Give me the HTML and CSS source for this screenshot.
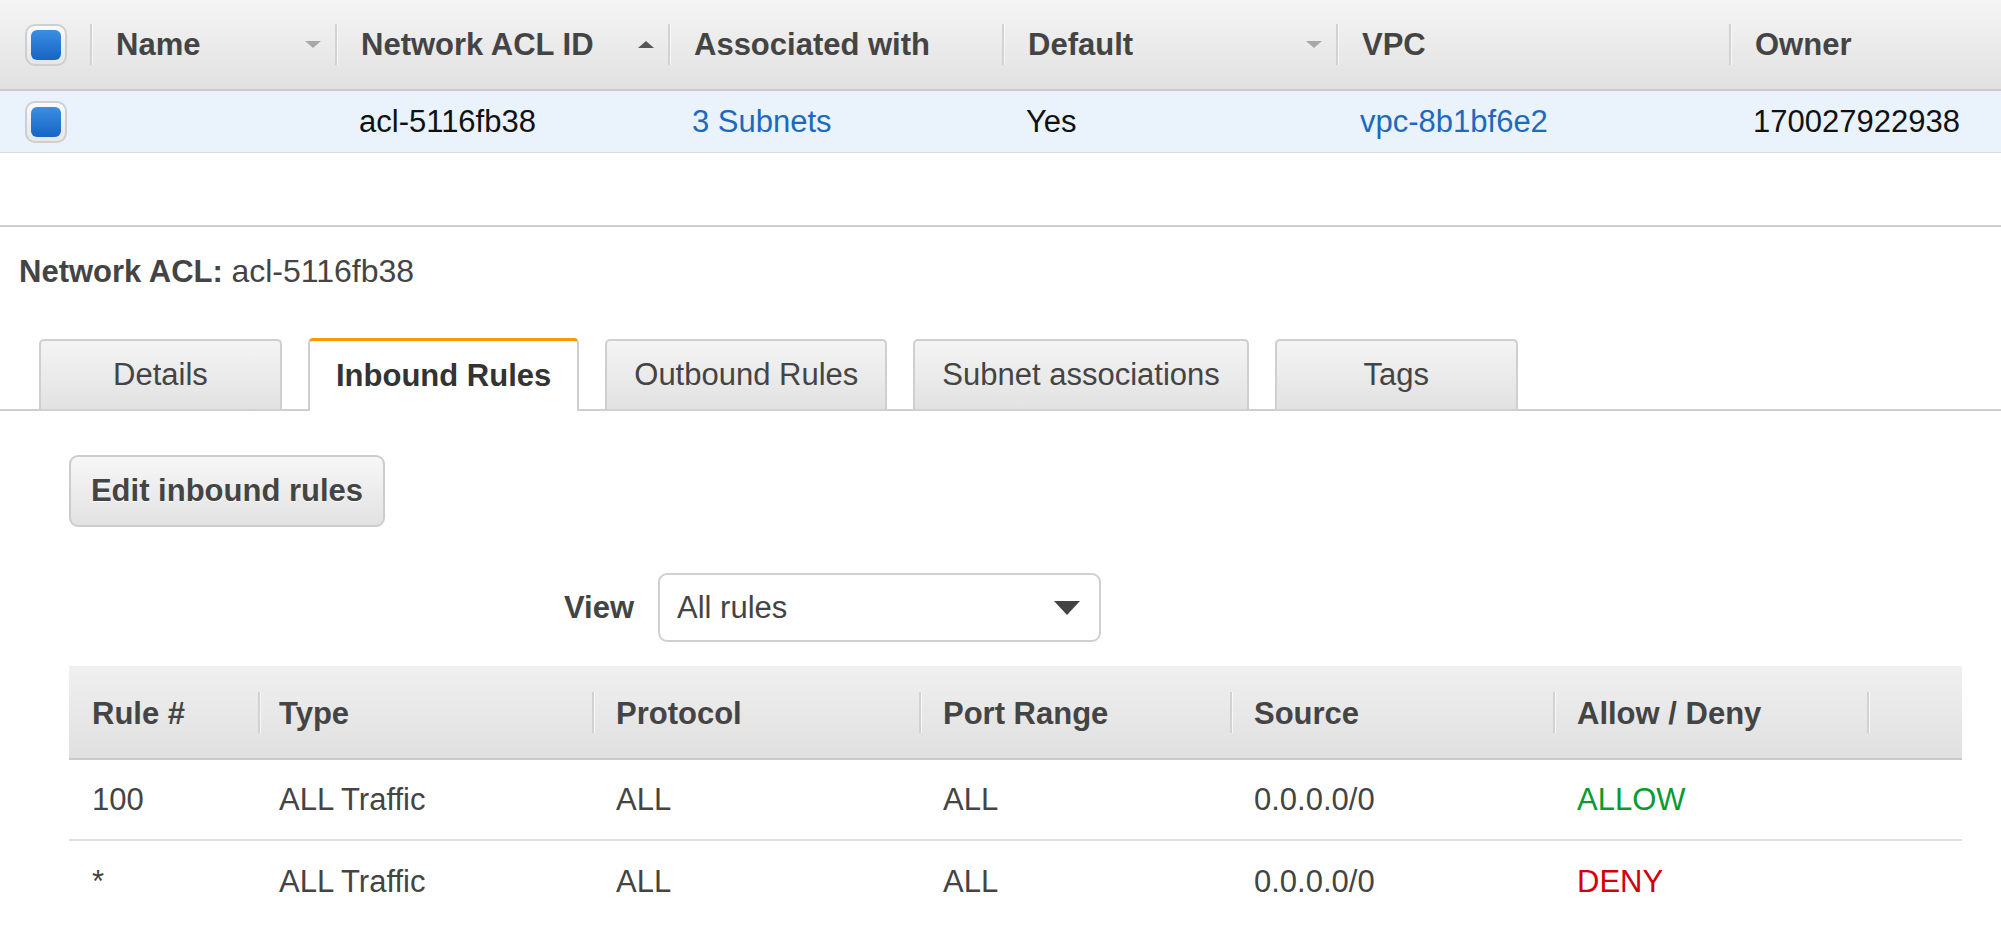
FILE: index.html
```html
<!DOCTYPE html>
<html>
<head>
<meta charset="utf-8">
<title>Network ACLs</title>
<link rel="stylesheet" href="styles.css">
</head>
<body>
<div class="list">
  <div class="list-head">
    <div class="hc hc-first"><span class="cb"><span class="cb-fill"></span></span></div>
    <div class="hc"><span class="div"></span><span class="ht">Name</span><span class="sort down"></span></div>
    <div class="hc"><span class="div"></span><span class="ht">Network ACL ID</span><span class="sort up"></span></div>
    <div class="hc"><span class="div"></span><span class="ht">Associated with</span></div>
    <div class="hc"><span class="div"></span><span class="ht">Default</span><span class="sort down"></span></div>
    <div class="hc"><span class="div"></span><span class="ht">VPC</span></div>
    <div class="hc"><span class="div"></span><span class="ht">Owner</span></div>
  </div>
  <div class="list-row">
    <div class="dc dc-first"><span class="cb"><span class="cb-fill"></span></span></div>
    <div class="dc"></div>
    <div class="dc">acl-5116fb38</div>
    <div class="dc"><a class="link">3 Subnets</a></div>
    <div class="dc">Yes</div>
    <div class="dc"><a class="link">vpc-8b1bf6e2</a></div>
    <div class="dc">170027922938</div>
  </div>
</div>

<div class="detail">
  <h2 class="detail-title"><b>Network ACL:</b> <span class="title-val">acl-5116fb38</span></h2>
  <div class="tabs">
    <div class="tab">Details</div>
    <div class="tab active">Inbound Rules</div>
    <div class="tab">Outbound Rules</div>
    <div class="tab">Subnet associations</div>
    <div class="tab">Tags</div>
  </div>
  <div class="tab-body">
    <button class="btn">Edit inbound rules</button>
    <div class="view-row">
      <label class="view-label">View</label>
      <div class="select">
        <span>All rules</span>
        <svg class="caret" width="26" height="14" viewBox="0 0 26 14"><polygon points="0,0 26,0 13,14" fill="#444"/></svg>
      </div>
    </div>
    <div class="rules">
      <div class="rh rh-first">Rule #</div>
      <div class="rh"><span class="div"></span><span class="rt rt-type">Type</span></div>
      <div class="rh"><span class="div"></span><span class="rt">Protocol</span></div>
      <div class="rh"><span class="div"></span><span class="rt">Port Range</span></div>
      <div class="rh"><span class="div"></span><span class="rt">Source</span></div>
      <div class="rh"><span class="div"></span><span class="rt">Allow / Deny</span></div>
      <div class="rh"><span class="div"></span></div>

      <div class="rc rc-first">100</div>
      <div class="rc rc-type">ALL Traffic</div>
      <div class="rc">ALL</div>
      <div class="rc">ALL</div>
      <div class="rc">0.0.0.0/0</div>
      <div class="rc allow">ALLOW</div>
      <div class="rc"></div>

      <div class="rc rc-first last">*</div>
      <div class="rc rc-type last">ALL Traffic</div>
      <div class="rc last">ALL</div>
      <div class="rc last">ALL</div>
      <div class="rc last">0.0.0.0/0</div>
      <div class="rc last deny">DENY</div>
      <div class="rc last"></div>
    </div>
  </div>
</div>
</body>
</html>
```

FILE: styles.css
```css
* { box-sizing: border-box; }
html, body { margin: 0; padding: 0; background: #fff; }
body {
  font-family: "Liberation Sans", Arial, Helvetica, sans-serif;
  font-size: 31px;
  color: #444;
  width: 2001px;
  overflow: hidden;
}

/* ---------- top list ---------- */
.list-head, .list-row {
  display: grid;
  grid-template-columns: 90px 245px 333px 334px 334px 393px 1fr;
}
.list-head {
  height: 91px;
  background: linear-gradient(#f5f5f5, #e1e1e1);
  border-bottom: 2px solid #cbcbcb;
}
.hc {
  display: flex;
  align-items: center;
  font-weight: bold;
  font-size: 31px;
  color: #444;
}
.hc-first { padding-left: 25px; }
.div {
  width: 2px;
  height: 41px;
  background: #d2d2d2;
  box-shadow: 1px 0 0 #f8f8f8;
  flex: none;
}
.ht { margin-left: 24px; }
.sort {
  margin-left: auto;
  margin-right: 14px;
  width: 0; height: 0;
  border-left: 8px solid transparent;
  border-right: 8px solid transparent;
}
.sort.down { border-top: 7px solid #a8a8a8; }
.sort.up { border-bottom: 7px solid #555; }

.list-row {
  height: 62px;
  background: #eaf2fc;
  border-bottom: 1px solid #dadada;
}
.dc {
  display: flex;
  align-items: center;
  padding-left: 24px;
  color: #111;
  font-size: 31px;
}
.dc-first { padding-left: 25px; }
.link { color: #1b6ac0; text-decoration: none; }

.cb {
  display: flex;
  align-items: center;
  justify-content: center;
  width: 42px; height: 42px;
  border: 2px solid #cfcfcf;
  border-radius: 10px;
  background: linear-gradient(#fafafa, #e6e6e6);
}
.cb-fill {
  width: 30px; height: 30px;
  border-radius: 6px;
  background: linear-gradient(#3b8ee2, #1764c4);
}

/* ---------- detail ---------- */
.detail {
  margin-top: 72px;
  border-top: 2px solid #cfcfcf;
}
.detail-title {
  margin: 26px 0 0 19px;
  font-size: 31px;
  line-height: 36px;
  font-weight: normal;
  color: #444;
}
.detail-title b { font-weight: bold; }
.title-val { font-size: 32px; }

.tabs {
  margin-top: 48px;
  display: flex;
  align-items: flex-end;
  gap: 26px;
  padding-left: 39px;
  border-bottom: 2px solid #cfcfcf;
  height: 73px;
}
.tab {
  height: 70px;
  min-width: 243px;
  padding: 0 27px;
  display: flex;
  align-items: center;
  justify-content: center;
  background: linear-gradient(#f4f4f4, #e2e2e2);
  border: 2px solid #cfcfcf;
  border-bottom: none;
  border-radius: 5px 5px 0 0;
  color: #444;
  font-size: 31px;
}
.tab.active {
  height: 73px;
  margin-bottom: -2px;
  padding: 0 26px;
  background: #fff;
  border-top: 3px solid #ff9900;
  font-weight: bold;
  color: #333;
}

.tab-body {
  padding: 44px 39px 0 69px;
}
.btn {
  display: block;
  width: 316px;
  height: 72px;
  border: 2px solid #cccccc;
  border-radius: 9px;
  background: linear-gradient(#f7f7f7, #e2e2e2);
  font-family: inherit;
  font-size: 31px;
  font-weight: bold;
  color: #444;
  text-shadow: 0 1px 0 #fff;
  padding: 0;
}

.view-row {
  margin-top: 46px;
  display: flex;
  align-items: center;
  gap: 24px;
}
.view-label {
  width: 565px;
  text-align: right;
  font-weight: bold;
  font-size: 31px;
  color: #444;
}
.select {
  width: 443px;
  height: 69px;
  border: 2px solid #d0d0d0;
  border-radius: 9px;
  display: flex;
  align-items: center;
  justify-content: space-between;
  padding: 0 19px 0 17px;
  color: #444;
  font-size: 31px;
  background: #fff;
}

/* ---------- rules table ---------- */
.rules {
  margin-top: 24px;
  display: grid;
  grid-template-columns: 189px 334px 327px 311px 323px 314px 1fr;
}
.rh {
  height: 94px;
  padding-top: 4px;
  display: flex;
  align-items: center;
  background: linear-gradient(#f0f0f0, #e0e0e0);
  border-bottom: 2px solid #c9c9c9;
  font-weight: bold;
  font-size: 31px;
  color: #444;
}
.rh .div { margin-top: -4px; }
.rh-first { padding-left: 23px; }
.rt { margin-left: 22px; }
.rt-type { margin-left: 19px; }
.rc {
  height: 81px;
  display: flex;
  align-items: center;
  padding-left: 24px;
  border-bottom: 2px solid #dedede;
  font-size: 31px;
  color: #444;
}
.rc-type { padding-left: 21px; }
.rc-first { padding-left: 23px; }
.rc.last { border-bottom: none; }
.allow { color: #0a9b30; }
.deny { color: #d0000d; }
```
